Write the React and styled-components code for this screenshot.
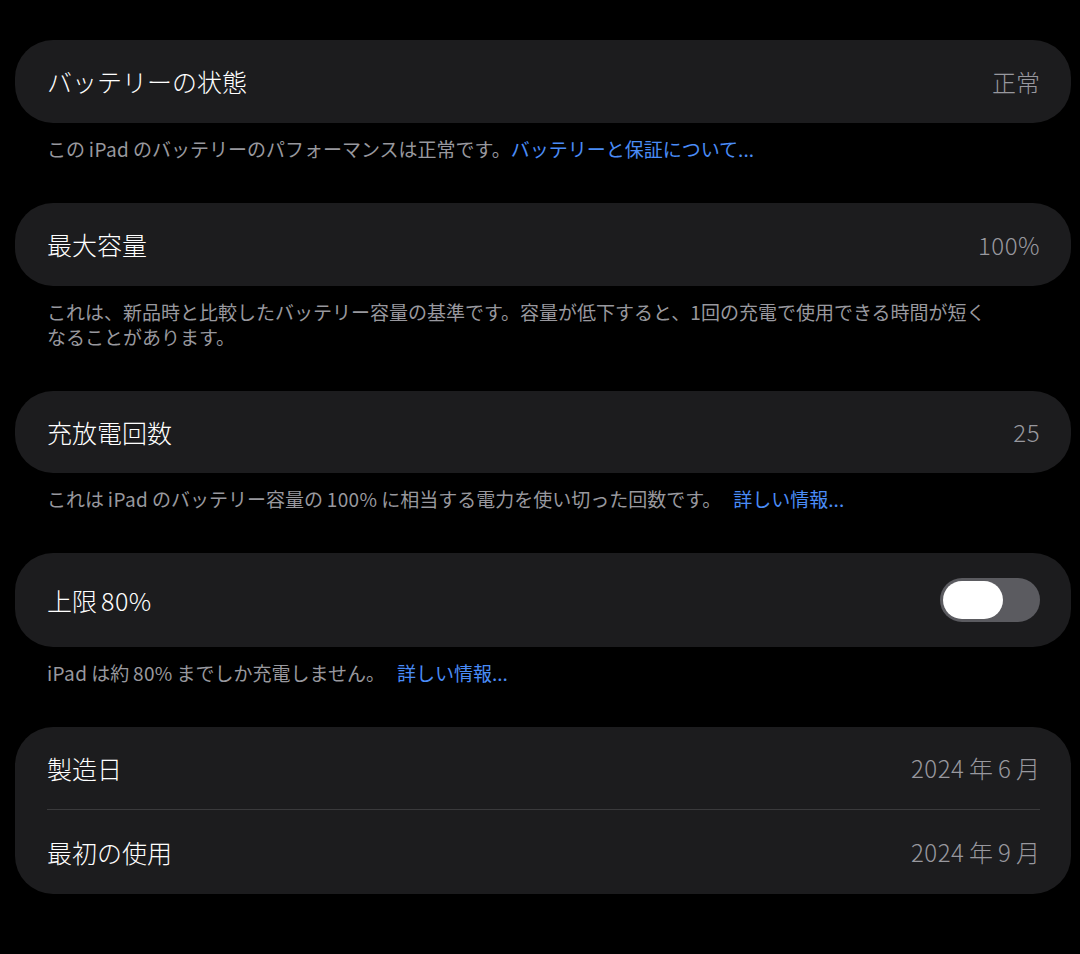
import React, { useState } from "react";
import styled, { createGlobalStyle } from "styled-components";

const GlobalStyle = createGlobalStyle`
  html, body {
    margin: 0;
    background: #000;
  }
  body {
    font-family: "Noto Sans CJK JP", "Noto Sans", sans-serif;
    -webkit-font-smoothing: antialiased;
  }
`;

const Page = styled.div`
  padding: 40px 9px 40px 15px;
  min-height: 954px;
  box-sizing: border-box;
  background: #000;
`;

const Card = styled.div`
  background: #1c1c1e;
  border-radius: 38px;
  padding: 0 31px 0 32px;
`;

const Row = styled.div`
  display: flex;
  align-items: center;
  justify-content: space-between;
  height: ${props => props.height || 83}px;
  box-sizing: border-box;
`;

const Divider = styled.div`
  height: 1px;
  background: #3a3a3c;
`;

const Title = styled.span`
  color: #fff;
  font-size: 25px;
  line-height: 1;
  font-weight: 300;
`;

const Value = styled.span`
  color: #98989e;
  font-size: 24px;
  line-height: 1;
  font-weight: 300;
`;

/* Latin runs inside Japanese text get a little air on each side, as iOS does */
const Latin = styled.span`
  margin-left: ${props => props.$left ?? 0.2}em;
  margin-right: ${props => props.$right ?? 0.2}em;
  letter-spacing: 0.02em;
`;

const Caption = styled.p`
  margin: 13px 0 42px;
  padding: 0 0 0 32px;
  max-width: 952px;
  color: #98989e;
  font-size: 19px;
  line-height: 25px;
  font-weight: 400;
`;

const Link = styled.a`
  color: #4a8cf7;
  text-decoration: none;
  cursor: pointer;
  margin-left: ${props => (props.$spaced ? "12px" : "0")};
`;

const Track = styled.button`
  width: 100px;
  height: 44px;
  border: none;
  border-radius: 22px;
  padding: 3px;
  background: ${props => (props.$on ? "#30d158" : "#5b5b60")};
  display: flex;
  justify-content: ${props => (props.$on ? "flex-end" : "flex-start")};
  cursor: pointer;
  box-sizing: border-box;
`;

const Knob = styled.span`
  width: 60px;
  height: 38px;
  border-radius: 19px;
  background: #fff;
  display: block;
`;

const Toggle = () => {
  const [on, setOn] = useState(false);
  return (
    <Track $on={on} onClick={() => setOn(!on)} aria-label="上限80%">
      <Knob />
    </Track>
  );
};

const DateValue = ({ year, month }) => (
  <Value>
    <Latin $left={0} $right={0.2}>
      {year}
    </Latin>
    年<Latin>{month}</Latin>月
  </Value>
);

const App = () => {
  return (
    <Page>
      <GlobalStyle />
      <Card>
        <Row>
          <Title>バッテリーの状態</Title>
          <Value>正常</Value>
        </Row>
      </Card>
      <Caption>
        この<Latin>iPad</Latin>のバッテリーのパフォーマンスは正常です。
        <Link>バッテリーと保証について...</Link>
      </Caption>

      <Card>
        <Row>
          <Title>最大容量</Title>
          <Value>
            <Latin $left={0} $right={0}>100%</Latin>
          </Value>
        </Row>
      </Card>
      <Caption>
        これは、新品時と比較したバッテリー容量の基準です。容量が低下すると、1回の充電で使用できる時間が短くなることがあります。
      </Caption>

      <Card>
        <Row height={82}>
          <Title>充放電回数</Title>
          <Value>
            <Latin $left={0} $right={0}>25</Latin>
          </Value>
        </Row>
      </Card>
      <Caption>
        これは<Latin>iPad</Latin>のバッテリー容量の<Latin>100%</Latin>
        に相当する電力を使い切った回数です。
        <Link $spaced>詳しい情報...</Link>
      </Caption>

      <Card>
        <Row height={94}>
          <Title>
            上限<Latin $left={0.16} $right={0}>80%</Latin>
          </Title>
          <Toggle />
        </Row>
      </Card>
      <Caption>
        <Latin $left={0}>iPad</Latin>は約<Latin>80%</Latin>
        までしか充電しません。
        <Link $spaced>詳しい情報...</Link>
      </Caption>

      <Card>
        <Row height={82}>
          <Title>製造日</Title>
          <DateValue year="2024" month="6" />
        </Row>
        <Divider />
        <Row height={84}>
          <Title>最初の使用</Title>
          <DateValue year="2024" month="9" />
        </Row>
      </Card>
    </Page>
  );
};

export default App;
